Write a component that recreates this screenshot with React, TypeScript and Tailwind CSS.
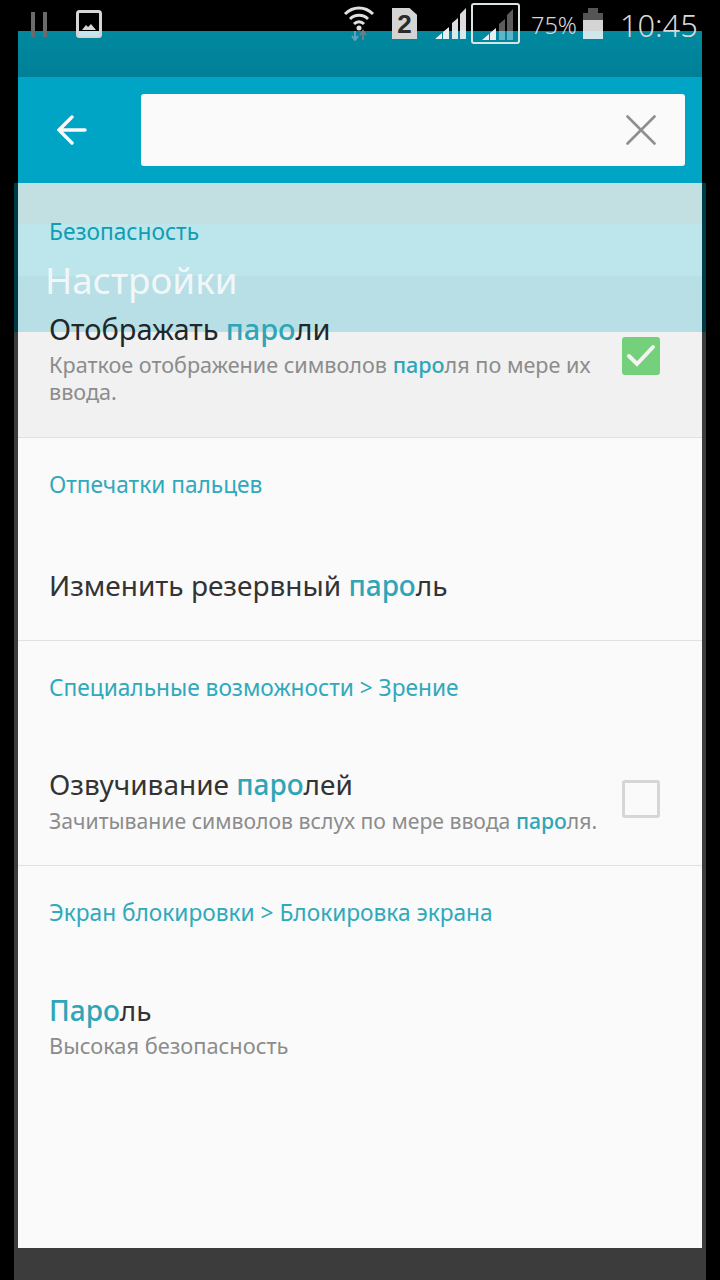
import { ReactNode } from 'react';

const Hit = ({ children }: { children: ReactNode }) => <span className="font-medium text-[#2fa5b8]">{children}</span>;

const Label = ({ children }: { children: ReactNode }) => (
  <div className="text-[22.7px] leading-[28px] text-[#2fa9bc]">{children}</div>
);

const Title = ({ children }: { children: ReactNode }) => (
  <div className="text-[28px] leading-[36px] text-[#333333]">{children}</div>
);

const Sub = ({ children, size = 'text-[21.5px]' }: { children: ReactNode; size?: string }) => (
  <div className={`mt-[4px] leading-[27px] text-[#8c8c8c] ${size}`}>{children}</div>
);

const Signal = ({ id, low, high }: { id: string; low: string; high: string }) => (
  <svg width="33" height="31" viewBox="0 0 33 31">
    <defs>
      <linearGradient id={id} x1="0" y1="0" x2="0" y2="1">
        <stop offset="0.72" stopColor={high} />
        <stop offset="0.72" stopColor={low} />
      </linearGradient>
    </defs>
    <path d="M1 31l7-6v6zM9 31v-7l6-5v12z" fill="#e6eef0" />
    <path d="M18 31V15l6-5v21zM26 31V6l6-6v31z" fill={`url(#${id})`} />
  </svg>
);

const StatusBar = () => (
  <div className="absolute inset-x-0 top-0 z-20 flex h-[46px] items-start">
    <div className="ml-[31px] mt-[12px] flex gap-[8px]">
      <div className="h-[25px] w-[4px] bg-[#6b6b6b]" />
      <div className="h-[25px] w-[4px] bg-[#6b6b6b]" />
    </div>
    <svg className="ml-[29px] mt-[10px]" width="26" height="28" viewBox="0 0 26 28" fill="none">
      <rect x="1.5" y="1.5" width="23" height="25" rx="2" stroke="#d6d6d6" strokeWidth="3" />
      <path d="M6 20l4-5 2 2 3-3 5 6z" fill="#d6d6d6" />
      <rect x="3" y="21" width="20" height="5" fill="#c4e6ee" />
    </svg>
    <svg className="ml-[241px] mt-[5px]" width="32" height="36" viewBox="0 0 32 36" fill="none">
      <path d="M2 9c8-8 20-8 28 0M7 14c5-5 13-5 18 0M11 19c3-3 7-3 10 0" stroke="#e0e0e0" strokeWidth="3" />
      <circle cx="16" cy="23" r="2.5" fill="#e0e0e0" />
      <path d="M12 26v9M9 31l3 4 3-4" stroke="#5fa6bd" strokeWidth="2" />
      <path d="M20 35v-9M17 30l3-4 3 4" stroke="#6f7f86" strokeWidth="2" />
    </svg>
    <div className="ml-[17px] mt-[8px] flex h-[31px] w-[25px] items-center justify-center bg-[#d4d4d4] font-['Liberation_Sans',sans-serif] text-[26px] leading-none font-bold text-[#2b2b2b] [clip-path:polygon(0_0,70%_0,100%_22%,100%_100%,0_100%)]">
      2
    </div>
    <div className="ml-[17px] mt-[8px]">
      <Signal id="sigA" low="#d8e8ec" high="#dcdcdc" />
    </div>
    <div className="relative ml-[4px] mt-[3px] h-[41px] w-[49px] rounded-[3px] border-2 border-[#d8e4e6]">
      <div className="absolute bottom-[2px] left-[8px]">
        <Signal id="sigB" low="#5fb4c6" high="#5c5c5c" />
      </div>
    </div>
    <div className="ml-[11px] mt-[10px] text-[23.5px] leading-[30px] font-light text-[#d8d8d8]">75%</div>
    <div className="ml-[6px] mt-[8px] flex w-[20px] flex-col items-center">
      <div className="h-[5px] w-[10px] bg-[#555555]" />
      <div className="h-[7px] w-[20px] bg-[#555555]" />
      <div className="h-[11px] w-[20px] bg-[#d4d4d4]" />
      <div className="h-[8px] w-[20px] bg-[#cfe6ea]" />
    </div>
    <div className="ml-[17px] mt-[6px] text-[30.8px] leading-[38px] font-light text-[#d8d8d8]">10:45</div>
  </div>
);

const SearchHeader = () => (
  <div className="border-x-[4px] border-black">
    <div className="h-[46px] bg-gradient-to-b from-[#00899f] to-[#008098]" />
    <div className="flex h-[106px] items-center bg-[#00a5c5] pr-[17px] pl-[39px]">
      <svg width="30" height="30" viewBox="0 0 30 30" fill="none" stroke="#fafafa" strokeWidth="3.4" strokeLinecap="round">
        <path d="M28 15H2M15 2L2 15l13 13" />
      </svg>
      <div className="ml-[54px] flex h-[72px] flex-1 items-center justify-end rounded-[3px] bg-[#fafafa] pr-[29px]">
        <svg width="30" height="30" viewBox="0 0 30 30" fill="none" stroke="#8e8e8e" strokeWidth="2.6" strokeLinecap="round">
          <path d="M1.5 1.5l27 27M28.5 1.5l-27 27" />
        </svg>
      </div>
    </div>
  </div>
);

export default function App() {
  return (
    <div className="relative flex h-[1280px] w-[720px] flex-col overflow-hidden bg-black font-['Noto_Sans',sans-serif]">
      <StatusBar />
      <div className="h-[31px] shrink-0" />
      <div className="mx-[14px] flex flex-1 flex-col bg-[#3c3c3c]">
        <SearchHeader />
        <div className="mx-[4px] flex flex-1 flex-col">
          <div className="relative flex-1 bg-[#fafafa]">
            {/* highlighted result, with the fading title card on top of it */}
            <section className="relative border-b border-[#e0e0e0] bg-[#f1f1f1] pt-[35px] pr-[42px] pb-[32px] pl-[31px]">
              <div className="absolute -inset-x-[4px] top-0 flex h-[149px] flex-col bg-[#003a44] px-[4px]">
                <div className="h-[41px] bg-[#c2dfe2]" />
                <div className="h-[52px] bg-[#bde6ec]" />
                <div className="h-[56px] bg-[#b8dfe5]" />
              </div>
              <div className="relative">
                <div className="text-[22.7px] leading-[28px] text-[#0f9db5]">Безопасность</div>
                <div className="absolute top-[38px] -left-[4px] text-[36.8px] leading-[48px] text-[#f1f7f8]">Настройки</div>
                <div className="mt-[65px] flex items-center">
                  <div className="flex-1">
                    <Title>
                      <span className="text-[29px] text-[#20282c]">Отображать</span>{' '}
                      <span className="text-[29px]">
                        <Hit>паро</Hit>
                        <span className="text-[#20282c]">ли</span>
                      </span>
                    </Title>
                    <Sub size="text-[21.6px]">
                      Краткое отображение символов <Hit>паро</Hit>ля по мере их
                      <br />
                      ввода.
                    </Sub>
                  </div>
                  <div className="mb-[5px] ml-[20px] flex size-[38px] items-center justify-center rounded-[3px] bg-[#75d07b]">
                    <svg width="30" height="24" viewBox="0 0 30 24" fill="none" stroke="#f4f4f4" strokeWidth="4" strokeLinecap="round">
                      <path d="M3 12l8 8L27 3" />
                    </svg>
                  </div>
                </div>
              </div>
            </section>

            <section className="border-b border-[#e0e0e0] pt-[33px] pr-[42px] pb-[37px] pl-[31px]">
              <Label>Отпечатки пальцев</Label>
              <div className="mt-[68px]">
                <Title>
                  Изменить резервный <Hit>паро</Hit>ль
                </Title>
              </div>
            </section>

            <section className="border-b border-[#e0e0e0] pt-[33px] pr-[42px] pb-[31px] pl-[31px]">
              <Label>Специальные возможности &gt; Зрение</Label>
              <div className="mt-[64px] flex items-center">
                <div className="min-w-0 flex-1 whitespace-nowrap">
                  <Title>
                    Озвучивание <Hit>паро</Hit>лей
                  </Title>
                  <div className="pt-px">
                    <Sub size="text-[21.2px]">
                      Зачитывание символов вслух по мере ввода <Hit>паро</Hit>ля.
                    </Sub>
                  </div>
                </div>
                <div className="mb-[2px] ml-[20px] size-[38px] shrink-0 rounded-[3px] border-[3px] border-[#d6d6d6]" />
              </div>
            </section>

            <section className="pt-[33px] pr-[42px] pl-[31px]">
              <Label>Экран блокировки &gt; Блокировка экрана</Label>
              <div className="mt-[65px]">
                <Title>
                  <Hit>Паро</Hit>ль
                </Title>
                <Sub size="text-[21.8px]">Высокая безопасность</Sub>
              </div>
            </section>
          </div>
          <div className="h-[32px] shrink-0" />
        </div>
      </div>
    </div>
  );
}
